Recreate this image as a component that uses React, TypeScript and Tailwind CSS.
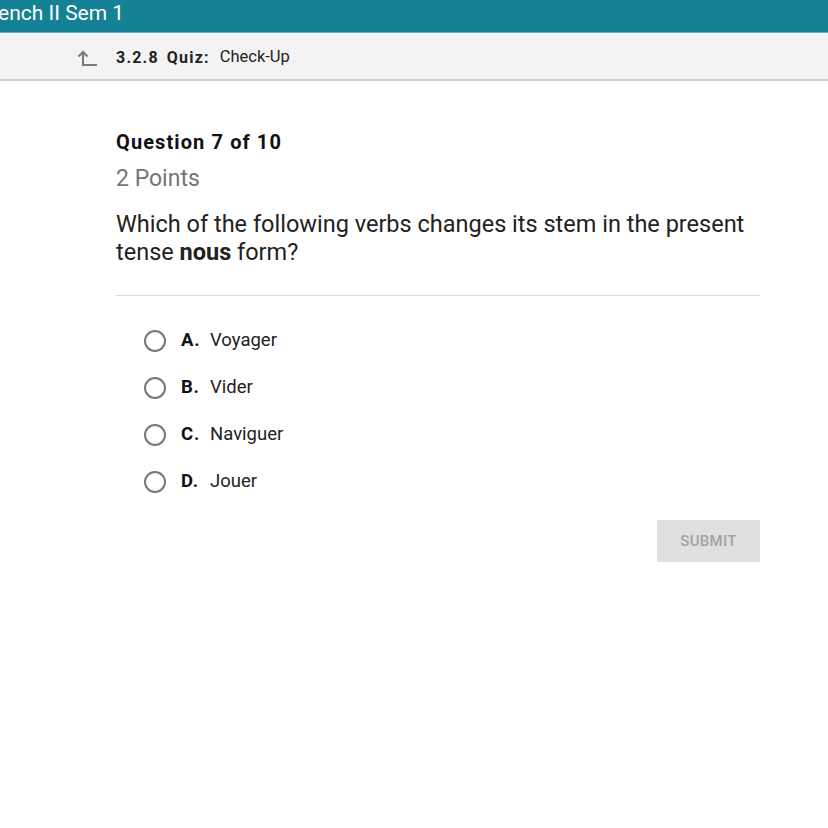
import React from "react";

const options = [
  { l: "A.", t: "Voyager" },
  { l: "B.", t: "Vider" },
  { l: "C.", t: "Naviguer" },
  { l: "D.", t: "Jouer" },
];

export default function App() {
  return (
    <div className="w-[828px] h-[828px] bg-white overflow-hidden" style={{ fontFamily: "Roboto, 'Liberation Sans', sans-serif" }}>
      <div className="h-[33px] bg-[#158195] border-b border-[#5fb3c0] flex items-center">
        <span className="text-white text-[21px] ml-[-2px] leading-none pb-[6px]">ench II Sem 1</span>
      </div>
      <div className="h-[48px] pt-[3px] bg-[#f4f3f3] border-b-2 border-[#cfcfcf] flex items-center">
        <svg className="ml-[77px] mt-[1px]" width="21" height="19" viewBox="0 0 21 19" fill="none" stroke="#7a7a7a" strokeWidth="2">
          <path d="M6 17V3" />
          <path d="M1.5 7.5L6 3l4.5 4.5" />
          <path d="M6 16h14" />
        </svg>
        <span className="ml-[18px] text-[16px] font-bold text-[#222] tracking-[1.2px]">3.2.8</span>
        <span className="ml-[8px] text-[16px] font-bold text-[#222] tracking-[1.2px]">Quiz:</span>
        <span className="ml-[10px] text-[16.5px] text-[#222]">Check-Up</span>
      </div>
      <div className="pl-[116px] pr-[60px]">
        <div className="mt-[48px] text-[20px] font-bold text-[#111] tracking-[1.1px] leading-[26px]">Question 7 of 10</div>
        <div className="mt-[11px] text-[23px] text-[#757575] leading-[26px]">2 Points</div>
        <div className="mt-[18px] text-[23.5px] text-[#222] leading-[28px]">
          Which of the following verbs changes its stem in the present tense <b className="font-bold">nous</b> form?
        </div>
        <div className="mt-[29px] mr-[8px] border-t border-[#dcdcdc]" />
        <div className="mt-[33px] flex flex-col gap-[24px] pl-[28px]">
          {options.map((o) => (
            <div key={o.l} className="flex items-center h-[23px]">
              <div className="w-[22px] h-[22px] rounded-full border-2 border-[#777]" />
              <span className="ml-[15px] text-[18.5px] font-bold text-[#111] tracking-[0.8px] w-[29px]">{o.l}</span>
              <span className="text-[18.5px] text-[#222]">{o.t}</span>
            </div>
          ))}
        </div>
        <div className="mt-[27px] mr-[8px] flex justify-end">
          <div className="w-[103px] h-[42px] bg-[#e0e0e0] flex items-center justify-center text-[15px] font-medium text-[#a3a3a3] tracking-[0.3px]">SUBMIT</div>
        </div>
      </div>
    </div>
  );
}
